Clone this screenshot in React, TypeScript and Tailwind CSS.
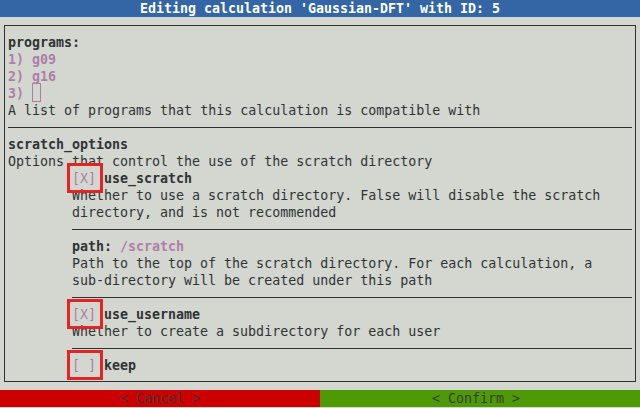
const mono = "font-['DejaVu_Sans_Mono','Liberation_Mono',monospace] text-[13.3px] leading-[17px]";

function Hr() {
  return (
    <div className="h-[17px] flex items-center">
      <div className="h-px w-full bg-[#2e3436]" />
    </div>
  );
}

function Check({ checked }: { checked: boolean }) {
  return (
    <span className="relative text-[#ad7fa8]">
      {checked ? '[X]' : '[ ]'}
      <span className="absolute -left-[5px] -right-[7px] -top-[8px] -bottom-[7px] border-[3px] border-[#e32424]" />
    </span>
  );
}

export default function App() {
  return (
    <div className={`w-[640px] h-[408px] bg-[#d3d7cf] text-[#2e3436] overflow-hidden ${mono}`}>
      <div className="h-[17px] bg-[#3465a4] text-white font-bold text-center whitespace-pre">
        Editing calculation 'Gaussian-DFT' with ID: 5
      </div>

      <div className="mx-[4px] mt-[8px] border border-[#2e3436] pl-[3px] pr-[3px] pt-[8px] pb-[7px] whitespace-pre">
        <div className="font-bold">programs:</div>
        <div className="font-bold text-[#ad7fa8]">1) g09</div>
        <div className="font-bold text-[#ad7fa8]">2) g16</div>
        <div className="font-bold text-[#ad7fa8] flex">
          <span>3) </span>
          <span className="w-[9px] h-[19px] -mt-[2px] border border-[#ad7fa8]" />
        </div>
        <div>A list of programs that this calculation is compatible with</div>
        <Hr />
        <div className="font-bold">scratch_options</div>
        <div>Options that control the use of the scratch directory</div>

        <div className="ml-[64px]">
          <div>
            <Check checked />
            <span className="font-bold"> use_scratch</span>
          </div>
          <div>Whether to use a scratch directory. False will disable the scratch</div>
          <div>directory, and is not recommended</div>
          <Hr />
          <div>
            <span className="font-bold">path:</span>
            <span className="font-bold text-[#ad7fa8]"> /scratch</span>
          </div>
          <div>Path to the top of the scratch directory. For each calculation, a</div>
          <div>sub-directory will be created under this path</div>
          <Hr />
          <div>
            <Check checked />
            <span className="font-bold"> use_username</span>
          </div>
          <div>Whether to create a subdirectory for each user</div>
          <Hr />
          <div>
            <Check checked={false} />
            <span className="font-bold"> keep</span>
          </div>
        </div>
      </div>

      <div className="mt-[8px] h-[17px] flex whitespace-pre text-[#3a3a3a]">
        <div className="w-[320px] bg-[#cc0000] pl-[120px]">&lt; Cancel &gt;</div>
        <div className="w-[320px] bg-[#4e9a06] pl-[112px]">&lt; Confirm &gt;</div>
      </div>
    </div>
  );
}
